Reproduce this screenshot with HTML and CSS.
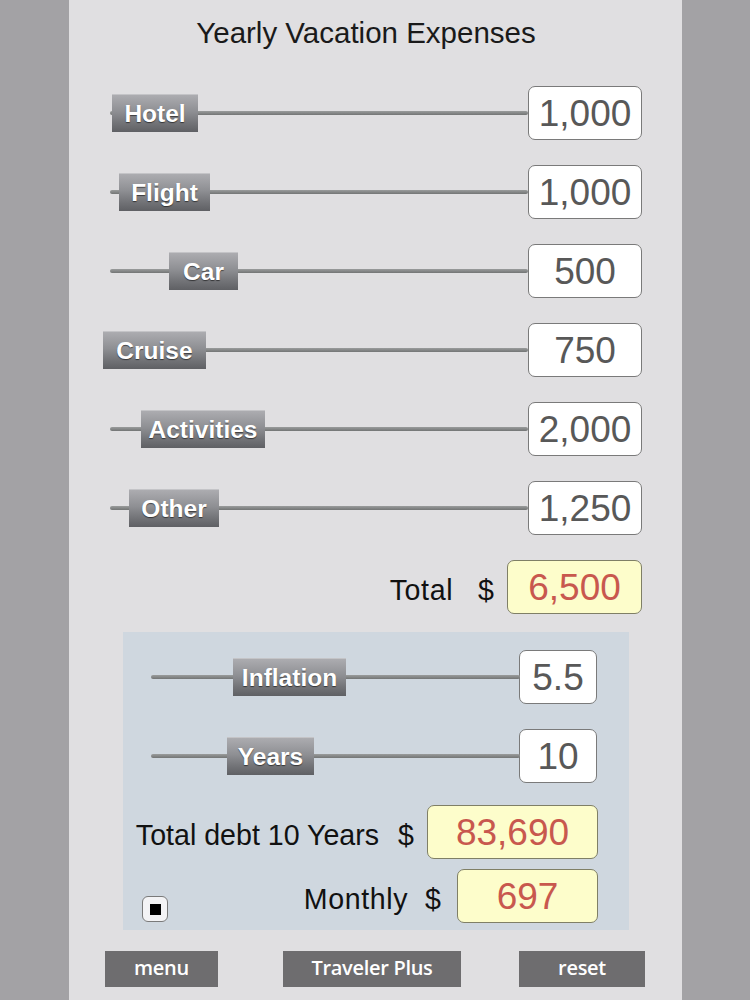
FILE: index.html
```html
<!DOCTYPE html>
<html>
<head>
<meta charset="utf-8">
<link rel="stylesheet" href="styles.css">
</head>
<body>
<div class="app">
  <h1 class="title">Yearly Vacation Expenses</h1>

  <div class="rows">
    <div class="row">
      <div class="slider"><div class="track"></div><div class="thumb w-hotel" style="left:2px">Hotel</div></div>
      <div class="value">1,000</div>
    </div>
    <div class="row">
      <div class="slider"><div class="track"></div><div class="thumb w-flight" style="left:9px">Flight</div></div>
      <div class="value">1,000</div>
    </div>
    <div class="row">
      <div class="slider"><div class="track"></div><div class="thumb w-car" style="left:59px">Car</div></div>
      <div class="value">500</div>
    </div>
    <div class="row">
      <div class="slider"><div class="track"></div><div class="thumb w-cruise" style="left:-7px">Cruise</div></div>
      <div class="value">750</div>
    </div>
    <div class="row">
      <div class="slider"><div class="track"></div><div class="thumb w-activities" style="left:31px">Activities</div></div>
      <div class="value">2,000</div>
    </div>
    <div class="row">
      <div class="slider"><div class="track"></div><div class="thumb w-other" style="left:19px">Other</div></div>
      <div class="value">1,250</div>
    </div>
    <div class="row total-row">
      <span class="label wide total-label">Total</span>
      <span class="label dollar">$</span>
      <div class="result total-box">6,500</div>
    </div>
  </div>

  <div class="panel">
    <div class="row slider-row">
      <div class="slider"><div class="track"></div><div class="thumb w-inflation" style="left:82px">Inflation</div></div>
      <div class="value small">5.5</div>
    </div>
    <div class="row slider-row second">
      <div class="slider"><div class="track"></div><div class="thumb w-years" style="left:76px">Years</div></div>
      <div class="value small">10</div>
    </div>
    <div class="row debt-row">
      <span class="label">Total debt 10 Years</span>
      <span class="label dollar d2">$</span>
      <div class="result debt-box">83,690</div>
    </div>
    <div class="row monthly-row">
      <div class="check"><div class="check-inner"></div></div>
      <span class="label wide monthly-label">Monthly</span>
      <span class="label dollar d3">$</span>
      <div class="result monthly-box">697</div>
    </div>
  </div>

  <div class="buttons">
    <div class="btn btn-menu">menu</div>
    <div class="btn btn-plus">Traveler Plus</div>
    <div class="btn btn-reset">reset</div>
  </div>
</div>
</body>
</html>
```

FILE: styles.css
```css
html, body {
  margin: 0;
  padding: 0;
}
body {
  background: #a3a2a5;
  font-family: "Liberation Sans", Arial, sans-serif;
  width: 750px;
  height: 1000px;
  overflow: hidden;
}
.app {
  margin-left: 69px;
  width: 613px;
  height: 1000px;
  background: #e0dfe1;
  overflow: hidden;
}
.title {
  margin: 0;
  padding: 16px 19px 0 0;
  font-size: 29.5px;
  line-height: 34px;
  font-weight: normal;
  text-align: center;
  color: #1a1a1a;
}
.rows {
  margin: 36px 0 0 41px;
  width: 532px;
  display: flex;
  flex-direction: column;
  gap: 25px;
}
.row {
  display: flex;
  align-items: center;
  height: 54px;
  flex-shrink: 0;
}
.slider {
  flex: 1;
  position: relative;
  height: 54px;
  display: flex;
  align-items: center;
}
.track {
  width: 100%;
  height: 4px;
  border-radius: 2px;
  background: linear-gradient(#9a9c9c, #737575);
}
.thumb {
  position: absolute;
  top: 50%;
  transform: translateY(-50%);
  height: 38px;
  box-sizing: border-box;
  display: flex;
  align-items: center;
  justify-content: center;
  background: linear-gradient(#acacb0 0%, #8e8f93 45%, #737478 75%, #5f6064 100%);
  border-top: 1px solid #c4c4c7;
  color: #fff;
  font-weight: bold;
  font-size: 24.5px;
  text-shadow: 0 1px 1px rgba(0, 0, 0, 0.55);
  white-space: nowrap;
}
.w-hotel { width: 86px; }
.w-flight { width: 91px; }
.w-car { width: 69px; }
.w-cruise { width: 103px; }
.w-activities { width: 124px; }
.w-other { width: 90px; }
.w-inflation { width: 113px; }
.w-years { width: 87px; }

.value {
  width: 114px;
  height: 54px;
  box-sizing: border-box;
  border: 1px solid #7a7a7a;
  border-radius: 7px;
  background: #fff;
  display: flex;
  align-items: center;
  justify-content: center;
  padding-top: 2px;
  font-size: 37px;
  color: #585858;
}
.value.small {
  width: 78px;
  margin-left: -1px;
}
.label {
  font-size: 28.6px;
  color: #111;
  padding-top: 7px;
  white-space: nowrap;
  flex-shrink: 0;
}
.label.wide {
  letter-spacing: 0.6px;
}
.total-row {
  justify-content: flex-end;
}
.total-label {
  margin-right: 25px;
}
.dollar {
  margin-right: 13px;
}
.result {
  height: 54px;
  box-sizing: border-box;
  border: 1px solid #7f7f66;
  border-radius: 7px;
  background: #fdfdcb;
  display: flex;
  align-items: center;
  justify-content: center;
  padding-top: 2px;
  font-size: 37px;
  color: #c8584e;
  flex-shrink: 0;
}
.total-box {
  width: 135px;
}
.panel {
  margin: 18px 0 0 54px;
  width: 506px;
  height: 298px;
  box-sizing: border-box;
  padding: 18px 32px 0 28px;
  background: #cfd7df;
  display: flex;
  flex-direction: column;
}
.slider-row.second {
  margin-top: 25px;
}
.debt-row {
  margin-top: 22px;
  justify-content: flex-end;
  margin-left: -20px;
  margin-right: -1px;
}
.d2 {
  margin-left: 19px;
}
.debt-box {
  width: 171px;
}
.monthly-row {
  margin-top: 10px;
  margin-left: -9px;
  margin-right: -1px;
}
.check {
  align-self: flex-end;
  margin-bottom: 1px;
  width: 26px;
  height: 26px;
  box-sizing: border-box;
  border: 1px solid #7a7a7a;
  border-radius: 6px;
  background: #f3f3f5;
  display: flex;
  align-items: center;
  justify-content: center;
}
.check-inner {
  width: 11px;
  height: 11px;
  background: #000;
}
.monthly-label {
  margin-left: auto;
  margin-right: 17px;
}
.d3 {
  margin-right: 16px;
}
.monthly-box {
  width: 141px;
}
.buttons {
  margin: 21px 0 0 36px;
  display: flex;
}
.btn {
  height: 36px;
  box-sizing: border-box;
  padding-bottom: 3px;
  background: #6e6d6f;
  color: #fff;
  font-family: "Open Sans", sans-serif;
  font-weight: 600;
  font-size: 20px;
  display: flex;
  align-items: center;
  justify-content: center;
  letter-spacing: -0.3px;
}
.btn-menu { width: 113px; }
.btn-plus { width: 178px; margin-left: 65px; }
.btn-reset { width: 126px; margin-left: 58px; }
```
